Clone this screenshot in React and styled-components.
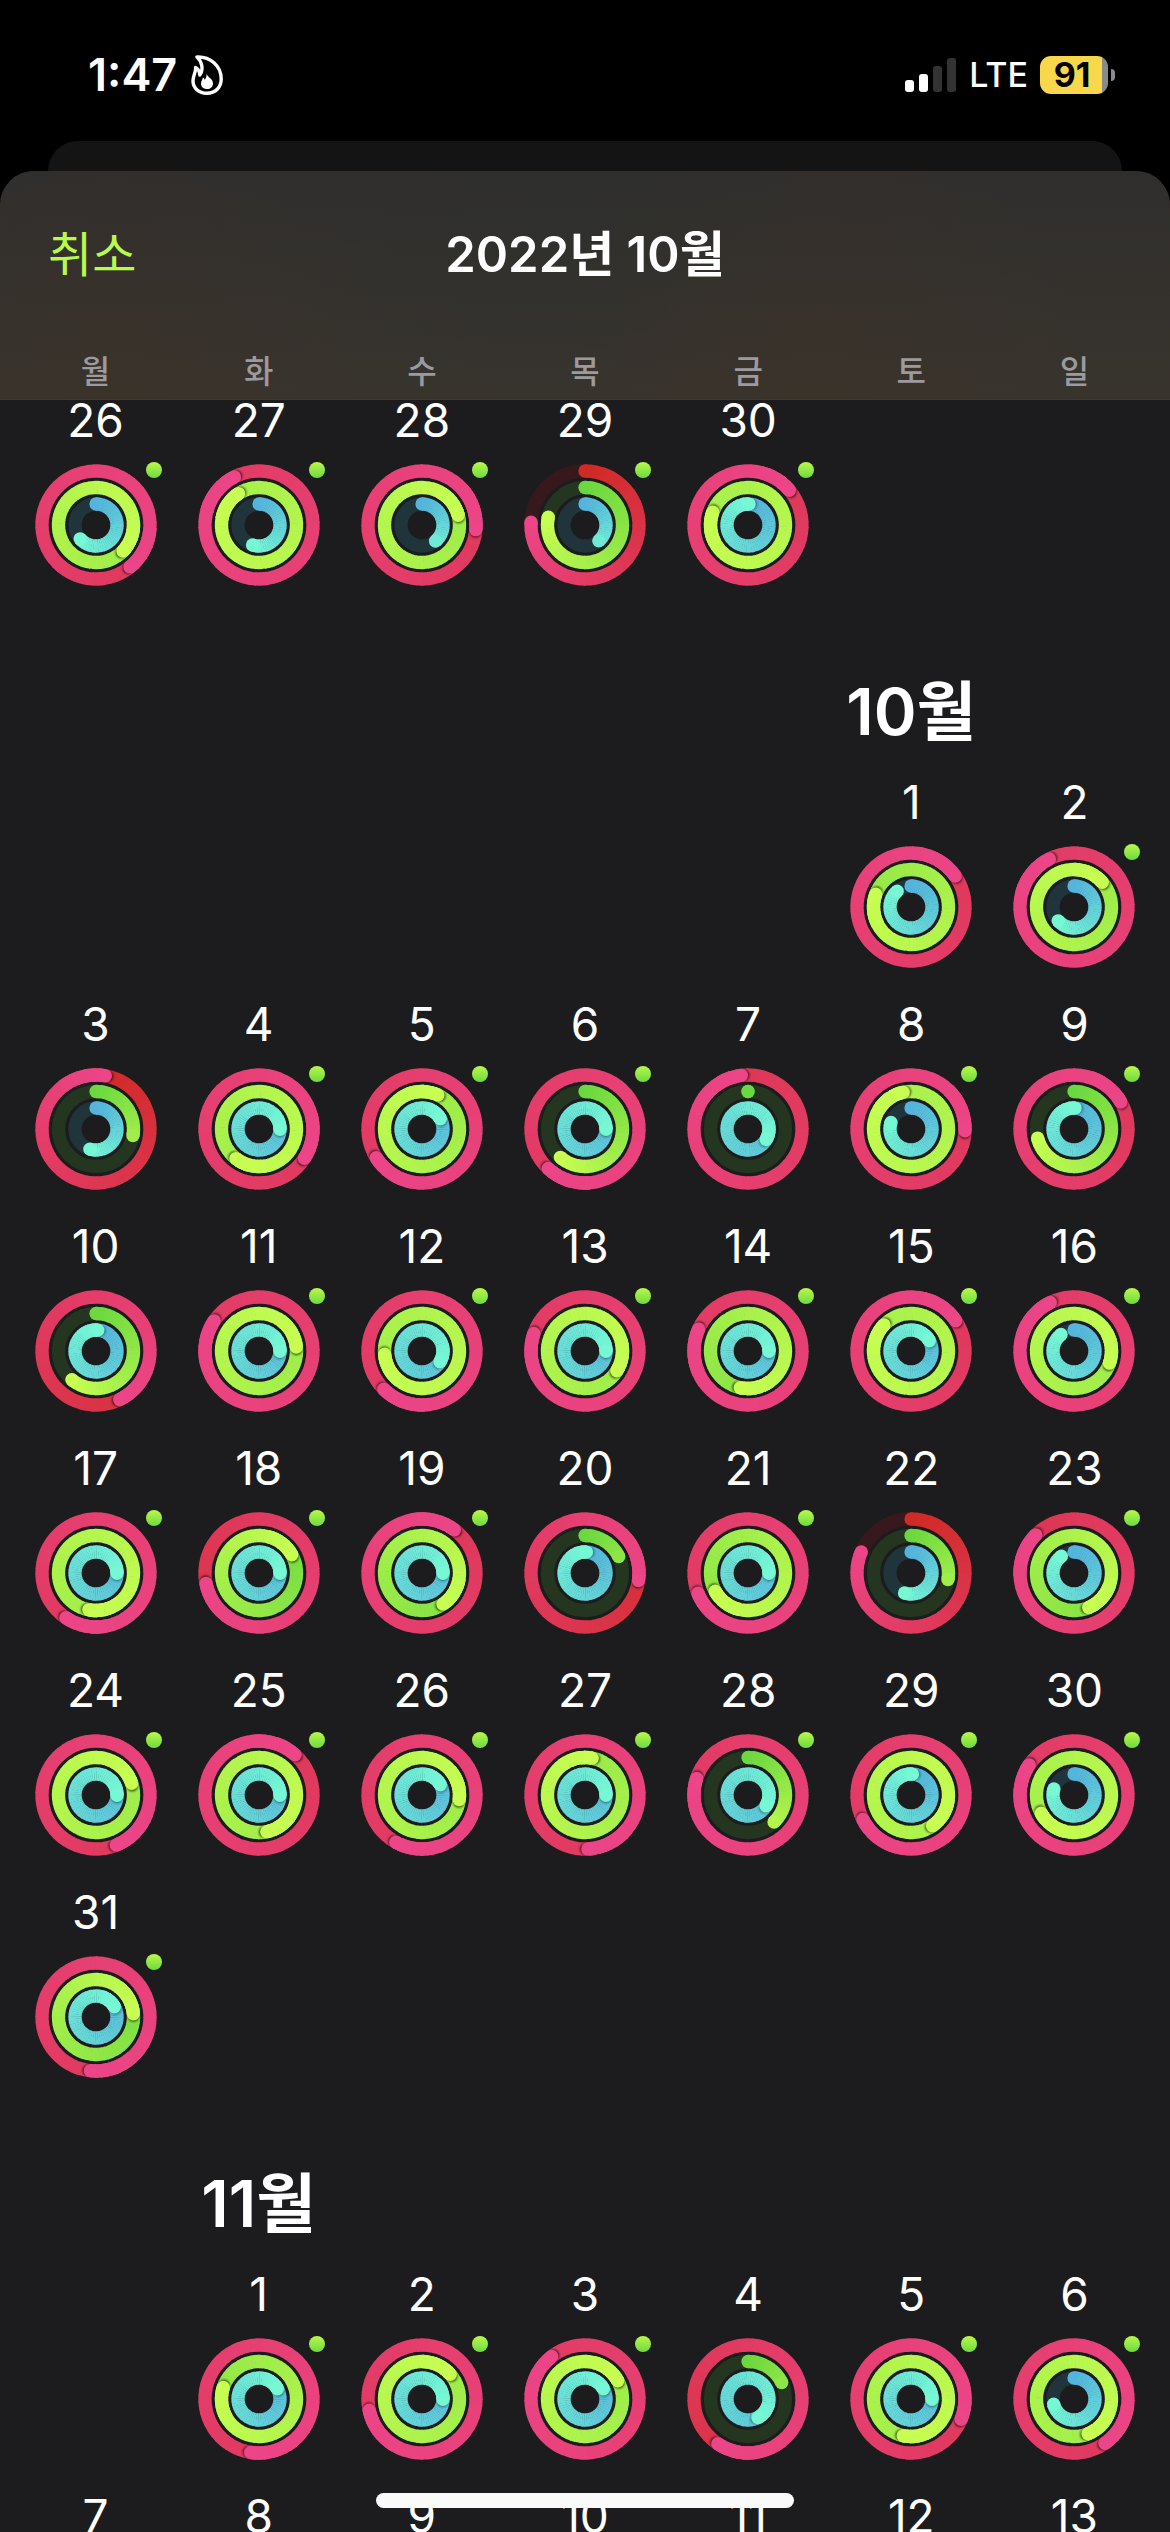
import React from "react";
import styled, { createGlobalStyle } from "styled-components";

const GlobalStyle = createGlobalStyle`
  *, *::before, *::after { box-sizing: border-box; }
  html, body { margin: 0; background: #000; }
  body {
    font-family: Inter, "Noto Sans CJK KR", sans-serif;
    color: #fff;
  }
`;

const Screen = styled.div`
  display: flex;
  flex-direction: column;
  height: 100vh;
  overflow: hidden;
`;

const StatusBar = styled.header`
  display: flex;
  align-items: center;
  justify-content: space-between;
  flex: none;
  height: 141px;
  padding: 8px 55px 0 88px;
`;

const StatusGroup = styled.div`
  display: flex;
  align-items: center;
  gap: ${(p) => p.$gap}px;
`;

const Clock = styled.time`
  font-size: 45px;
  font-weight: 600;
  line-height: 54px;
`;

const Carrier = styled.span`
  font-size: 34px;
  font-weight: 500;
  line-height: 44px;
`;

const Battery = styled.div`
  display: flex;
  align-items: center;
  gap: 3px;
`;

const BatteryBody = styled.div`
  display: flex;
  align-items: center;
  justify-content: center;
  width: 68px;
  height: 38px;
  padding-right: 4px;
  border-radius: 11px;
  background: linear-gradient(to right, #f8d84a 62px, #8a8a8c 62px);
  color: #000;
  font-size: 34px;
  font-weight: 700;
  line-height: 38px;
`;

const BatteryNub = styled.div`
  width: 4px;
  height: 12px;
  border-radius: 0 6px 6px 0;
  background: #8a8a8c;
`;

const BackCard = styled.div`
  flex: none;
  height: 30px;
  margin: 0 48px;
  border-radius: 30px 30px 0 0;
  background: #141414;
`;

const Sheet = styled.main`
  display: flex;
  flex-direction: column;
  flex: 1;
  min-height: 0;
  border-radius: 34px 34px 0 0;
  background: #1c1c1e;
  overflow: hidden;
`;

const SheetHeader = styled.div`
  position: relative;
  z-index: 1;
  flex: none;
  margin-bottom: -8px;
  border-bottom: 1px solid #3b3a3b;
  background:
    radial-gradient(circle at 10% 85%, rgba(64, 48, 36, 0.3), transparent 240px),
    radial-gradient(circle at 70% 85%, rgba(64, 48, 36, 0.3), transparent 260px),
    radial-gradient(circle at 48% 0%, rgba(44, 48, 46, 0.5), transparent 240px),
    linear-gradient(#302e2d, #38342d);
`;

const NavBar = styled.div`
  display: grid;
  grid-template-columns: 1fr auto 1fr;
  align-items: center;
  height: 168px;
  padding: 0 48px;
`;

const CancelButton = styled.button`
  justify-self: start;
  padding: 0;
  border: 0;
  background: none;
  color: #b8fa4b;
  font: inherit;
  font-size: 48px;
  line-height: 60px;
`;

const Title = styled.h1`
  margin: 0;
  font-size: 49px;
  font-weight: 600;
  line-height: 60px;
`;

const WeekGrid = styled.div`
  display: grid;
  grid-template-columns: repeat(7, 1fr);
  padding: 0 14px;
`;

const Weekday = styled.span`
  padding-top: 5px;
  font-size: 32px;
  font-weight: 500;
  line-height: 55px;
  text-align: center;
  color: #9d9a9f;
`;

const Calendar = styled.div`
  flex: 1;
  min-height: 0;
  overflow-y: auto;
  scrollbar-width: none;
`;

const MonthTitle = styled.h2`
  grid-column-start: ${(p) => p.$col};
  justify-self: center;
  margin: 0;
  padding: 60px 0 24px;
  font-size: 65px;
  font-weight: 600;
  line-height: 76px;
  white-space: nowrap;
`;

const Day = styled.button`
  grid-column-start: ${(p) => p.$col || "auto"};
  display: flex;
  flex-direction: column;
  align-items: center;
  gap: 16px;
  height: 222px;
  padding: 0;
  border: 0;
  background: none;
  color: #fff;
  font: inherit;
  font-size: 46px;
  line-height: 56px;
`;

const RingBox = styled.span`
  position: relative;
  width: 122px;
  height: 122px;
`;

const WorkoutDot = styled.span`
  position: absolute;
  top: -2px;
  right: -5px;
  width: 16px;
  height: 16px;
  border-radius: 50%;
  background: linear-gradient(#b9f74c, #6ddb3f);
`;

const HomeIndicator = styled.div`
  position: fixed;
  bottom: 24px;
  left: 50%;
  width: 418px;
  height: 15px;
  margin-left: -209px;
  border-radius: 8px;
  background: #fafafa;
  z-index: 2;
`;

const HiddenSvg = styled.svg`
  position: absolute;
`;

const RINGS = [
  { r: 54, from: [208, 42, 37], to: [236, 69, 136], track: "#37191d" },
  { r: 37.5, from: [107, 216, 63], to: [200, 254, 82], track: "#253620" },
  { r: 21, from: [84, 180, 220], to: [118, 248, 213], track: "#1f343b" },
];
const STROKE = 13.3;
const C = 61;

const point = (r, deg) => {
  const a = (deg * Math.PI) / 180;
  return [C + r * Math.sin(a), C - r * Math.cos(a)];
};

const arc = (r, a, b) => {
  const [x1, y1] = point(r, a);
  const [x2, y2] = point(r, b);
  return `M${x1.toFixed(2)} ${y1.toFixed(2)}A${r} ${r} 0 0 1 ${x2.toFixed(2)} ${y2.toFixed(2)}`;
};

const mix = (ring, t) =>
  `rgb(${ring.from.map((v, i) => Math.round(v + (ring.to[i] - v) * t)).join(",")})`;

/* Gradient sweep from one angle to another, in degrees clockwise from the top. */
function Sweep({ ring, start, end, total }) {
  const step = 6;
  const parts = [];
  for (let a = start; a < end; a += step) {
    const b = Math.min(a + step, end);
    parts.push(
      <path
        key={a}
        d={arc(ring.r, a, Math.min(b + 1, end))}
        stroke={mix(ring, (a + b) / 2 / total)}
        strokeWidth={STROKE}
        fill="none"
      />
    );
  }
  return parts;
}

/* laps: 0.5 is half of the goal, 2.25 is two full turns and a quarter.
   Short arcs stop part of the way through the gradient. */
function Ring({ ring, index, laps }) {
  const end = laps * 360;
  const total = Math.max(end, 175);
  const over = laps > 1;
  const start = over ? end - 360 : 0;
  const [ex, ey] = point(ring.r, end);
  const [sx, sy] = point(ring.r, end + 120 / ring.r);
  const [tx, ty] = point(ring.r, 0);
  return (
    <g>
      {!over && (
        <circle cx={C} cy={C} r={ring.r} stroke={ring.track} strokeWidth={STROKE} fill="none" />
      )}
      {!over && <circle cx={tx} cy={ty} r={STROKE / 2} fill={mix(ring, 0)} />}
      <Sweep ring={ring} start={start} end={end} total={total} />
      {over && (
        <g clipPath={`url(#band${index})`}>
          <circle cx={sx} cy={sy} r="6" fill="#000" opacity={index === 2 ? 0.35 : 0.6} filter="url(#soft)" />
        </g>
      )}
      {over && <Sweep ring={ring} start={end - 48} end={end} total={total} />}
      <circle cx={ex} cy={ey} r={STROKE / 2} fill={mix(ring, end / total)} />
    </g>
  );
}

const bandPath = (r) => {
  const o = r + STROKE / 2;
  const i = r - STROKE / 2;
  const circle = (q) => `M${C - q} ${C}a${q} ${q} 0 1 0 ${2 * q} 0a${q} ${q} 0 1 0 ${-2 * q} 0Z`;
  return circle(o) + circle(i);
};

const SharedDefs = () => (
  <HiddenSvg width="0" height="0" aria-hidden="true">
    <defs>
      <filter id="soft" x="-50%" y="-50%" width="200%" height="200%">
        <feGaussianBlur stdDeviation="1.3" />
      </filter>
      {RINGS.map((ring, i) => (
        <clipPath id={`band${i}`} key={i}>
          <path d={bandPath(ring.r)} clipRule="evenodd" />
        </clipPath>
      ))}
    </defs>
  </HiddenSvg>
);

const ActivityRings = ({ laps }) => (
  <svg width="122" height="122" viewBox="0 0 122 122" display="block" aria-hidden="true">
    {RINGS.map((ring, i) => (
      <Ring key={i} ring={ring} index={i} laps={laps[i]} />
    ))}
  </svg>
);

/* [turns, degrees] pairs for move, exercise and stand, then whether a workout was logged. */
const d = (day, move, exercise, stand, workout = true) => ({
  day,
  laps: [move, exercise, stand].map(([n, deg]) => n + deg / 360),
  workout,
});

const MONTHS = [
  {
    startCol: 1,
    days: [
      d(26, [2, 141], [2, 134], [0, 229]),
      d(27, [2, 333], [2, 327], [0, 198]),
      d(28, [2, 95], [2, 75], [0, 140]),
      d(29, [0, 273], [0, 282], [0, 139]),
      d(30, [2, 50], [2, 290], [1, 3]),
    ],
  },
  {
    title: "10월",
    startCol: 6,
    days: [
      d(1, [2, 55], [1, 290], [0, 319], false),
      d(2, [2, 333], [2, 49], [0, 229]),
      d(3, [1, 10], [0, 100], [0, 197], false),
      d(4, [2, 123], [2, 218], [1, 91]),
      d(5, [2, 238], [2, 25], [1, 61]),
      d(6, [2, 223], [0, 221], [1, 91]),
      d(7, [1, 353], [0, 0], [1, 120], false),
      d(8, [2, 92], [2, 348], [0, 288]),
      d(9, [2, 60], [0, 256], [1, 3]),
      d(10, [1, 154], [0, 220], [1, 5], false),
      d(11, [2, 304], [2, 84], [1, 91]),
      d(12, [2, 225], [2, 265], [1, 121]),
      d(13, [2, 289], [2, 122], [1, 91]),
      d(14, [2, 294], [1, 192], [1, 91]),
      d(15, [2, 56], [2, 314], [1, 61]),
      d(16, [2, 334], [2, 109], [0, 322]),
      d(17, [2, 214], [2, 191], [1, 91]),
      d(18, [1, 259], [1, 61], [1, 91]),
      d(19, [2, 37], [1, 146], [1, 91]),
      d(20, [1, 98], [0, 64], [1, 4], false),
      d(21, [2, 248], [1, 241], [1, 91]),
      d(22, [0, 293], [0, 100], [0, 198], false),
      d(23, [1, 315], [1, 157], [0, 323]),
      d(24, [2, 158], [2, 72], [1, 91]),
      d(25, [2, 42], [2, 168], [1, 91]),
      d(26, [2, 209], [2, 97], [1, 61]),
      d(27, [2, 177], [2, 11], [1, 91]),
      d(28, [2, 288], [0, 136], [1, 121]),
      d(29, [2, 243], [3, 145], [1, 4]),
      d(30, [2, 304], [2, 241], [0, 287]),
      d(31, [2, 186], [1, 85], [1, 61]),
    ],
  },
  {
    title: "11월",
    startCol: 2,
    days: [
      d(1, [2, 189], [1, 288], [1, 61]),
      d(2, [2, 258], [2, 49], [1, 91]),
      d(3, [2, 322], [2, 61], [1, 61]),
      d(4, [1, 214], [0, 64], [1, 152], false),
      d(5, [2, 112], [2, 192], [1, 91]),
      d(6, [2, 145], [2, 158], [0, 256]),
      ...[7, 8, 9, 10, 11, 12, 13].map((day) => ({ day })),
    ],
  },
];

const WEEKDAYS = ["월", "화", "수", "목", "금", "토", "일"];

const FlameIcon = () => (
  <svg width="32" height="40" viewBox="0 0 32 40" fill="none" aria-hidden="true">
    <path
      d="M6 2C19 1.500 30.200 10.500 30.200 24C30.200 32.500 24.500 38.200 16 38.200C7.500 38.200 2 32.800 2 26C2 20.500 5 17 4.600 12.500C7 13.500 8.300 16 8.800 20C12.800 15 11 6.500 6 2Z"
      stroke="#fff"
      strokeWidth="3.4"
      strokeLinejoin="round"
    />
    <path
      d="M15.500 18.500C16 22 22 23.500 22 28.500C22 32 19.500 34 16 34C12.500 34 10 31.800 10 28.500C10 26 11.500 24.800 12 22.500C13 23 13.500 23.800 13.700 25C15.200 23 15.800 21 15.500 18.500Z"
      fill="#fff"
    />
  </svg>
);

const SignalIcon = () => (
  <svg width="52" height="34" viewBox="0 0 52 34" aria-hidden="true">
    <rect x="0" y="22" width="9" height="12" rx="3" fill="#fff" />
    <rect x="14" y="16" width="9" height="18" rx="3" fill="#fff" />
    <rect x="28" y="8" width="9" height="26" rx="3" fill="#333" />
    <rect x="42" y="0" width="9" height="34" rx="3" fill="#333" />
  </svg>
);

export default function App() {
  return (
    <Screen>
      <GlobalStyle />
      <SharedDefs />
      <StatusBar>
        <StatusGroup $gap={14}>
          <Clock>1:47</Clock>
          <FlameIcon />
        </StatusGroup>
        <StatusGroup $gap={12}>
          <SignalIcon />
          <Carrier>LTE</Carrier>
          <Battery>
            <BatteryBody>91</BatteryBody>
            <BatteryNub />
          </Battery>
        </StatusGroup>
      </StatusBar>
      <BackCard />
      <Sheet>
        <SheetHeader>
          <NavBar>
            <CancelButton type="button">취소</CancelButton>
            <Title>2022년 10월</Title>
          </NavBar>
          <WeekGrid>
            {WEEKDAYS.map((name) => (
              <Weekday key={name}>{name}</Weekday>
            ))}
          </WeekGrid>
        </SheetHeader>
        <Calendar>
          {MONTHS.map((month, m) => (
            <section key={m}>
              {month.title && (
                <WeekGrid>
                  <MonthTitle $col={month.startCol}>{month.title}</MonthTitle>
                </WeekGrid>
              )}
              <WeekGrid>
                {month.days.map(({ day, laps, workout }, i) => (
                  <Day key={day} type="button" $col={i === 0 ? month.startCol : undefined}>
                    {day}
                    {laps && (
                      <RingBox>
                        <ActivityRings laps={laps} />
                        {workout && <WorkoutDot />}
                      </RingBox>
                    )}
                  </Day>
                ))}
              </WeekGrid>
            </section>
          ))}
        </Calendar>
      </Sheet>
      <HomeIndicator />
    </Screen>
  );
}
